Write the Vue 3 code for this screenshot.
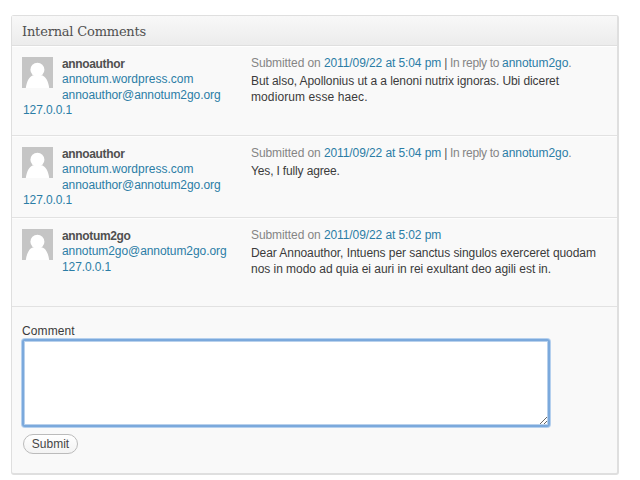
<script setup>
const comments = [
  {
    id: 1, author: 'annoauthor', site: 'annotum.wordpress.com', email: 'annoauthor@annotum2go.org',
    ip: '127.0.0.1', date: '2011/09/22 at 5:04 pm', reply: 'annotum2go',
    lines: [
      { text: 'But also, Apollonius ut a a lenoni nutrix ignoras. Ubi diceret', tracking: -0.08 },
      { text: 'modiorum esse haec.', tracking: 0.1 },
    ],
  },
  {
    id: 2, author: 'annoauthor', site: 'annotum.wordpress.com', email: 'annoauthor@annotum2go.org',
    ip: '127.0.0.1', date: '2011/09/22 at 5:04 pm', reply: 'annotum2go',
    lines: [{ text: 'Yes, I fully agree.', tracking: -0.15 }],
  },
  {
    id: 3, author: 'annotum2go', site: '', email: 'annotum2go@annotum2go.org',
    ip: '127.0.0.1', date: '2011/09/22 at 5:02 pm', reply: '',
    lines: [
      { text: 'Dear Annoauthor, Intuens per sanctus singulos exerceret quodam', tracking: -0.065 },
      { text: 'nos in modo ad quia ei auri in rei exultant deo agili est in.', tracking: -0.035 },
    ],
  },
]
</script>

<template>
  <main class="page">
    <section class="box">
      <h3 class="title"><span>Internal Comments</span></h3>
      <article v-for="c in comments" :key="c.id" class="row" :class="'row-' + c.id">
        <div class="author">
          <svg class="avatar" width="31" height="31" viewBox="0 0 31 31">
            <rect width="31" height="31" fill="#c5c5c5" />
            <circle cx="15.400" cy="12.800" r="7" fill="#fff" />
            <path d="M3.800 31C4.500 25 7.500 18.300 12 18.300H19C23.500 18.300 26.500 25 27.200 31Z" fill="#fff" />
          </svg>
          <strong>{{ c.author }}</strong>
          <a v-if="c.site">{{ c.site }}</a>
          <a class="email">{{ c.email }}</a>
          <a class="ip">{{ c.ip }}</a>
        </div>
        <div class="comment">
          <div class="meta">Submitted on <a>{{ c.date }}</a><span v-if="c.reply" class="reply">&nbsp;<i>|</i> In reply to <a>{{ c.reply }}</a>.</span></div>
          <p v-for="l in c.lines" :key="l.text" :style="{ letterSpacing: l.tracking + 'px' }">{{ l.text }}</p>
        </div>
      </article>
      <form class="form" @submit.prevent>
        <label for="comment">Comment</label>
        <textarea id="comment"></textarea>
        <button type="submit">Submit</button>
      </form>
    </section>
  </main>
</template>

<style>
body { background: #fff; }
</style>

<style scoped>
.page {
  box-sizing: border-box;
  width: 640px;
  height: 480px;
  padding: 15px 0 0 11px;
  overflow: hidden;
  font: 12px/15.3px "Liberation Sans", Arial, sans-serif;
  color: #3b3b3b;
}
.box {
  box-sizing: border-box;
  width: 608px;
  height: 460px;
  border: 1px solid #dfdfdf;
  border-right-width: 2px;
  border-bottom-width: 2px;
  border-radius: 3px;
  background: #f9f9f9;
}
.title {
  box-sizing: border-box;
  height: 30px;
  margin: 0;
  padding: 0 10px;
  border-bottom: 1px solid #dfdfdf;
  box-shadow: 0 1px 0 #fff;
  background: linear-gradient(#f8f8f8, #ececec);
  font: 400 13px/31px "DejaVu Serif", serif;
  letter-spacing: -0.2px;
  color: #505050;
}
.row {
  box-sizing: border-box;
  display: flex;
  padding: 11px 10px 0;
  border-bottom: 1px solid #e2e2e2;
  white-space: nowrap;
}
.row-1 { height: 90px; }
.row-2 { height: 82px; }
.row-3 { height: 89px; }
.row + .row { box-shadow: inset 0 1px 0 #fdfdfd; }
.author { width: 229px; }
.author strong, .author a { display: block; }
.author strong { color: #505050; letter-spacing: -0.35px; }
.author .email { letter-spacing: -0.07px; }
.author .ip { letter-spacing: -0.1px; }
.row-1 .ip, .row-2 .ip { padding-left: 1px; }
.avatar { float: left; margin: 0 9px 2px 0; }
a { color: #2b7da6; }
.meta { margin: -1px 0 3px; color: #858585; letter-spacing: -0.09px; }
.meta i { font-style: normal; color: #555; }
.reply { letter-spacing: -0.33px; }
.reply a { letter-spacing: -0.05px; }
p { margin: 0; }
.form {
  display: flex;
  flex-direction: column;
  align-items: flex-start;
  padding: 17px 10px 0;
}
label { letter-spacing: 0.1px; }
textarea {
  box-sizing: border-box;
  width: 528px;
  height: 88px;
  margin: 0;
  border: 2px solid #7ba9dc;
  border-radius: 3px;
  box-shadow: 0 0 0 1px #b5d0ee, inset 0 0 0 1px #b9d1ec;
  outline: none;
  background: #fff;
  resize: both;
}
button {
  box-sizing: border-box;
  width: 55px;
  height: 20px;
  margin: 7px 0 0 1px;
  padding: 0;
  border: 1px solid #bbb;
  border-radius: 10px;
  background: linear-gradient(#fff, #f3f3f3);
  font: 12px/18px "Liberation Sans", Arial, sans-serif;
  color: #464646;
}
</style>
